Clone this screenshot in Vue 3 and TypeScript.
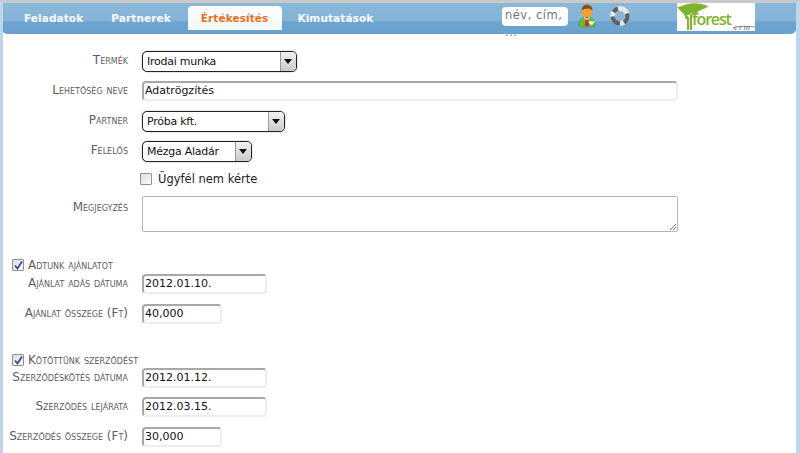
<script setup lang="ts">
const tabs = [
  { name: 'Feladatok', active: false },
  { name: 'Partnerek', active: false },
  { name: 'Értékesítés', active: true },
  { name: 'Kimutatások', active: false },
]
</script>

<template>
  <div class="page">
    <nav class="bar">
      <div class="tabs">
        <span v-for="t in tabs" :key="t.name" class="tab" :class="{ active: t.active }">{{ t.name }}</span>
      </div>
      <div class="search"><span>név, cím, ...</span></div>
      <svg class="user" width="18" height="24" viewBox="0 0 20 26">
        <path d="M1 24c0-7 3-10 9-10s9 3 9 10c-2 1.500-16 1.500-18 0z" fill="#62c02c" stroke="#4a9a20" stroke-width=".6"/>
        <path d="M8 14h4l-1 2 1.500 7-2.500 2-2.500-2 1.500-7z" fill="#d8262c"/>
        <path d="M7 14l3 2 3-2 0 1.500-3 2-3-2z" fill="#fff"/>
        <ellipse cx="10" cy="8" rx="6" ry="6.500" fill="#f2a032"/>
        <path d="M4 7c0-5 3-6.500 6-6.500s6 1.500 6 6.500c-2-3-9-3-12 0z" fill="#8a4d14"/>
        <path d="M11 19h8l-4 4.500z" fill="#fff"/>
      </svg>
      <svg class="help" width="22" height="22" viewBox="0 0 22 22">
        <circle cx="11" cy="11" r="7.500" fill="none" stroke="#e6e6e6" stroke-width="5"/>
        <path d="M4.500 7A7.500 7.500 0 0 1 9 3.800M18 8.500A7.500 7.500 0 0 1 15 17.500M11 18.500A7.500 7.500 0 0 1 3.500 11.500" fill="none" stroke="#5c6166" stroke-width="4.500"/>
      </svg>
      <div class="logo">
        <svg class="tree" width="32" height="28" viewBox="0 0 32 28">
          <path d="M0 4c3 0 6-2 11-3 5-1.500 13-1 20 2-2 3-6 3-9 5-3 2-5 3-8 2-1 1-3 3-5 2C7 11 3 8 0 4z" fill="#7fb52d"/>
          <path d="M11 27V15L7 10M14 27V12l6-3M11 16l-3-2" fill="none" stroke="#7fb52d" stroke-width="2"/>
        </svg>
        <span class="forest">forest</span>
        <span class="crm">crm</span>
        <svg class="swoosh" width="22" height="6" viewBox="0 0 22 6"><path d="M0 4c6-2 14-2 22-1" fill="none" stroke="#777" stroke-width=".8"/></svg>
      </div>
    </nav>

    <form class="form" @submit.prevent>
      <div class="row r-termek">
        <label>Termék</label>
        <div class="sel w155"><span>Irodai munka</span><i class="arrow"></i></div>
      </div>
      <div class="row r-name">
        <label>Lehetőség neve</label>
        <div class="inp wide">Adatrögzítés</div>
      </div>
      <div class="row r-partner">
        <label>Partner</label>
        <div class="sel w143"><span>Próba kft.</span><i class="arrow"></i></div>
      </div>
      <div class="row r-felelos">
        <label>Felelős</label>
        <div class="sel w110"><span>Mézga Aladár</span><i class="arrow"></i></div>
      </div>
      <div class="row r-check">
        <label></label>
        <div class="check-line"><i class="cb"></i><span>Ügyfél nem kérte</span></div>
      </div>
      <div class="row r-note">
        <label>Megjegyzés</label>
        <div class="area wide">
          <svg class="grip" width="8" height="8" viewBox="0 0 8 8"><path d="M7 1L1 7M7 4L4 7" stroke="#777" fill="none"/></svg>
        </div>
      </div>

      <div class="section s1"><i class="cb on"><svg width="11" height="11" viewBox="0 0 11 11"><path d="M2 5.500l2.500 3L9 1.500" fill="none" stroke="#3c4a9c" stroke-width="1.800"/></svg></i><span class="sc">Adtunk ajánlatot</span></div>
      <div class="row r-dt">
        <label>Ajánlat adás dátuma</label>
        <div class="inp w125">2012.01.10.</div>
      </div>
      <div class="row r-dt2">
        <label>Ajánlat összege (Ft)</label>
        <div class="inp w80">40,000</div>
      </div>

      <div class="section s2"><i class="cb on"><svg width="11" height="11" viewBox="0 0 11 11"><path d="M2 5.500l2.500 3L9 1.500" fill="none" stroke="#3c4a9c" stroke-width="1.800"/></svg></i><span class="sc">Kötöttünk szerződést</span></div>
      <div class="row r-dt3">
        <label>Szerződéskötés dátuma</label>
        <div class="inp w125">2012.01.12.</div>
      </div>
      <div class="row r-dt4">
        <label>Szerződés lejárata</label>
        <div class="inp w125">2012.03.15.</div>
      </div>
      <div class="row r-dt2">
        <label>Szerződés összege (Ft)</label>
        <div class="inp w80">30,000</div>
      </div>
    </form>
  </div>
</template>

<style>
html, body { margin: 0; background: #fff; overflow: hidden; }
</style>

<style scoped>
.page {
  width: 800px;
  height: 453px;
  box-sizing: border-box;
  border-top: 3px solid #c9c9c9;
  border-left: 3px solid #bcd6ec;
  border-right: 4px solid #bcd6ec;
  background: #fff;
  font-family: "DejaVu Sans", sans-serif;
  overflow: hidden;
}
.bar {
  height: 31px;
  margin-left: -1px;
  display: flex;
  align-items: flex-start;
  border-radius: 0 0 5px 5px;
  background: linear-gradient(#8ab8db 0, #86b4d8 55%, #6da4cf 62%, #6aa2ce 100%);
}
.tabs {
  display: flex;
  width: 500px;
  padding: 3px 0 0 7px;
  box-sizing: border-box;
}
.tab {
  height: 24px;
  line-height: 24px;
  font-size: 10.500px;
  letter-spacing: .1px;
  font-weight: 700;
  color: #fff;
  opacity: .95;
}
.tab:nth-child(1) { padding: 0 13px 0 15px; }
.tab:nth-child(2) { padding: 0 17px 0 15px; }
.tab:nth-child(3) { padding: 0 14px 0 13px; }
.tab:nth-child(4) { padding: 0 15px; }
.tab.active {
  background: #fff;
  color: #ef6c15;
  border-radius: 4px 4px 0 0;
}
.search {
  width: 66px;
  height: 19px;
  margin-top: 4px;
  background: #fff;
  border-radius: 4px;
  padding: 0 0 0 3px;
  box-sizing: border-box;
  font-size: 11.500px;
  line-height: 17px;
  color: #777;
  letter-spacing: .5px;
  white-space: normal;
  overflow: visible;
}
.search span { display: block; width: 62px; }
.user { margin: 1px 0 0 10px; }
.help { margin: 2px 0 0 13px; }
.logo {
  position: relative;
  width: 78px;
  height: 28px;
  margin: 0 0 0 46px;
  background: #fff;
}
.tree { position: absolute; left: 0; top: 0; }
.forest {
  position: absolute;
  left: 15px;
  top: 10px;
  font: 600 16px/12px "Open Sans", sans-serif;
  color: #7fb52d;
  letter-spacing: -1.200px;
}
.crm {
  position: absolute;
  left: 57px;
  top: 21px;
  font: italic 9px/6px "Liberation Serif", serif;
  color: #666;
  letter-spacing: 1px;
}
.swoosh { position: absolute; left: 56px; top: 21px; }
.form { display: block; }
.row {
  display: grid;
  grid-template-columns: 125px auto;
  column-gap: 14px;
  align-items: center;
  justify-content: start;
}
.row label {
  text-align: right;
  font-size: 12px;
  font-variant: small-caps;
  color: #5e5e5e;
  white-space: nowrap;
  direction: rtl;
  unicode-bidi: plaintext;
  line-height: 14px;
  padding-bottom: 3px;
}
.sc { font-size: 12px; font-variant: small-caps; color: #5e5e5e; }
.r-termek { margin-top: 17px; }
.r-name { margin-top: 9px; }
.r-partner { margin-top: 10px; }
.r-felelos { margin-top: 9px; }
.r-check { margin-top: 8px; height: 18px; }
.r-note { margin-top: 8px; align-items: start; }
.r-note label { padding-top: 4px; }
.r-dt { margin-top: 2px; }
.r-dt2 { margin-top: 10px; }
.r-dt3 { margin-top: 1px; }
.r-dt4 { margin-top: 9px; }
.sel {
  height: 21px;
  box-sizing: border-box;
  border: 1px solid #222;
  box-shadow: 0 0 1px #222;
  border-radius: 5px;
  display: flex;
  align-items: center;
  justify-content: space-between;
  padding-left: 4px;
  font-size: 11px;
  letter-spacing: -.25px;
  color: #111;
  overflow: hidden;
}
.arrow {
  width: 16px;
  height: 19px;
  box-sizing: border-box;
  border-left: 1px solid #999;
  background: linear-gradient(#f2f2f2, #c9c9c9);
  position: relative;
}
.arrow::after {
  content: "";
  position: absolute;
  left: 3px;
  top: 7px;
  border: 4px solid transparent;
  border-top: 5px solid #111;
  border-bottom: 0;
}
.w155 { width: 155px; }
.w143 { width: 143px; }
.w110 { width: 110px; }
.inp {
  height: 20px;
  box-sizing: border-box;
  border: 2px solid #eee;
  border-top-color: #a8a8a8;
  border-left-color: #a8a8a8;
  border-radius: 4px;
  padding-left: 1px;
  font-size: 11px;
  line-height: 16px;
  color: #111;
}
.wide { width: 536px; }
.w125 { width: 125px; }
.w80 { width: 80px; }
.check-line {
  display: flex;
  align-items: center;
  gap: 6px;
  margin-left: -2px;
  font-size: 11.500px;
  color: #222;
}
.cb {
  display: block;
  width: 12px;
  height: 12px;
  box-sizing: border-box;
  border: 1px solid #8e8f8f;
  border-radius: 1px;
  background: linear-gradient(135deg, #dcdcdc, #fdfdfd);
  position: relative;
  flex: none;
}
.cb svg { position: absolute; left: 0; top: 0; }
.area {
  position: relative;
  height: 36px;
  box-sizing: border-box;
  border: 1px solid #b5b5b5;
  border-radius: 2px;
}
.grip { position: absolute; right: 0; bottom: 0; }
.section {
  display: flex;
  align-items: center;
  gap: 4px;
  margin-left: 9px;
  height: 14px;
}
.s1 { margin-top: 26px; }
.s2 { margin-top: 29px; }
</style>
